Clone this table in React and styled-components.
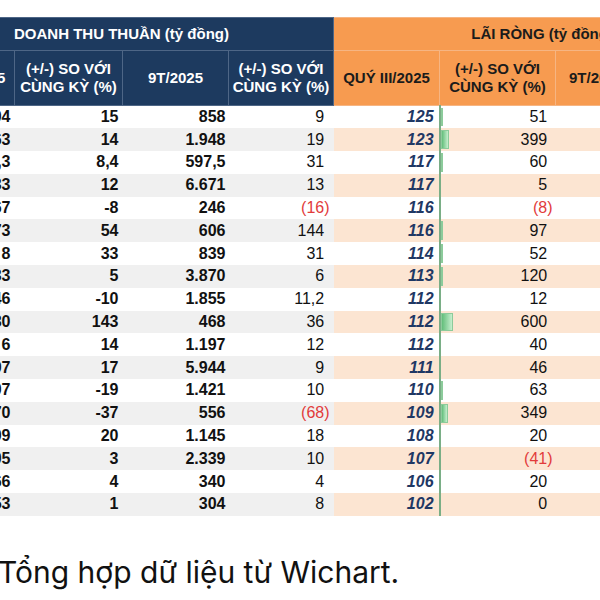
import React from "react";
import styled, { createGlobalStyle } from "styled-components";

const NAVY = "#1d3a5f";
const ORANGE = "#f79b50";

const rows = [
  ["04", "15", "858", 9, "125", 51],
  ["63", "14", "1.948", 19, "123", 399],
  [",3", "8,4", "597,5", 31, "117", 60],
  ["33", "12", "6.671", 13, "117", 5],
  ["67", "-8", "246", -16, "116", -8],
  ["73", "54", "606", 144, "116", 97],
  ["8", "33", "839", 31, "114", 52],
  ["33", "5", "3.870", 6, "113", 120],
  ["46", "-10", "1.855", "11,2", "112", 12],
  ["80", "143", "468", 36, "112", 600],
  ["6", "14", "1.197", 12, "112", 40],
  ["97", "17", "5.944", 9, "111", 46],
  ["07", "-19", "1.421", 10, "110", 63],
  ["70", "-37", "556", -68, "109", 349],
  ["09", "20", "1.145", 18, "108", 20],
  ["05", "3", "2.339", 10, "107", -41],
  ["66", "4", "340", 4, "106", 20],
  ["53", "1", "304", 8, "102", 0],
];

const widths = [105, 108, 106, 105, 106, 116, 82, 113];

const subHeads = [
  "QUÝ III/2025",
  "(+/-) SO VỚI CÙNG KỲ (%)",
  "9T/2025",
  "(+/-) SO VỚI CÙNG KỲ (%)",
  "QUÝ III/2025",
  "(+/-) SO VỚI CÙNG KỲ (%)",
  "9T/2025",
  "(+/-) SO VỚI CÙNG KỲ (%)",
];

const GlobalStyle = createGlobalStyle`
  body {
    margin: 0;
    background: #fff;
    font-family: "Liberation Sans", Arial, sans-serif;
  }
`;

const Page = styled.div`
  width: 600px;
  height: 600px;
  overflow: hidden;
  padding-top: 17px;
  box-sizing: border-box;
`;

const Table = styled.table`
  margin-left: -91px;
  border-collapse: collapse;
  table-layout: fixed;
  width: ${widths.reduce((a, b) => a + b, 0)}px;
`;

const HeadCell = styled.th`
  background: ${(p) => (p.$orange ? ORANGE : NAVY)};
  color: ${(p) => (p.$orange ? "#1b1b1b" : "#fff")};
  border: 1px solid ${(p) => (p.$orange ? "#f6b583" : "#4e6686")};
  font-size: 15px;
  font-weight: 700;
  line-height: 18px;
  text-align: center;
  padding: 0;
  height: ${(p) => (p.$top ? "33px" : "55px")};
  box-sizing: border-box;
  white-space: ${(p) => (p.$top ? "nowrap" : "normal")};
`;

const Row = styled.tr`
  height: 22.8px;
`;

const Cell = styled.td`
  position: relative;
  padding: 0 ${(p) => p.$pad || 4}px 0 0;
  height: 22.8px;
  text-align: right;
  font-size: 16px;
  line-height: 22px;
  white-space: nowrap;
  font-weight: ${(p) => (p.$bold ? 700 : 400)};
  font-style: ${(p) => (p.$italic ? "italic" : "normal")};
  color: ${(p) => (p.$red ? "#e23b3b" : p.$navy ? "#1f3864" : "#111")};
  background: ${(p) =>
    !p.$even ? "#fff" : p.$orange ? "#fce5d2" : "#f0f0f0"};
  border-left: ${(p) => (p.$axis ? "2px solid #7aae86" : "none")};
  box-sizing: border-box;
`;

const Bar = styled.span`
  position: absolute;
  left: 0;
  top: 2px;
  bottom: 2px;
  background: linear-gradient(90deg, #63be7b, #c6efce);
  border: 1px solid #8ccb9b;
  box-sizing: border-box;
`;

const Ghost = styled.span`
  visibility: hidden;
`;

const Caption = styled.p`
  margin: 38px 0 0 -2px;
  font-family: Inter, "Noto Sans", sans-serif;
  font-size: 30px;
  line-height: 36px;
  color: #111;
`;

const Signed = ({ v }) =>
  typeof v === "number" && v < 0 ? (
    <>({Math.abs(v)})</>
  ) : (
    <>
      {v}
      <Ghost>)</Ghost>
    </>
  );

export default function App() {
  return (
    <Page>
      <GlobalStyle />
      <Table>
        <colgroup>
          {widths.map((w, i) => (
            <col key={i} style={{ width: w }} />
          ))}
        </colgroup>
        <thead>
          <tr>
            <HeadCell $top colSpan={4}>
              DOANH THU THUẦN (tỷ đồng)
            </HeadCell>
            <HeadCell $top $orange colSpan={4}>
              LÃI RÒNG (tỷ đồng)
            </HeadCell>
          </tr>
          <tr>
            {subHeads.map((h, i) => (
              <HeadCell key={i} $orange={i >= 4}>
                {h}
              </HeadCell>
            ))}
          </tr>
        </thead>
        <tbody>
          {rows.map((r, i) => {
            const even = i % 2 === 1;
            const barW = Math.max(0, r[5] / 50);
            return (
              <Row key={i}>
                <Cell $even={even} $bold>{r[0]}</Cell>
                <Cell $even={even} $bold>{r[1]}</Cell>
                <Cell $even={even} $bold $pad={3}>{r[2]}</Cell>
                <Cell $even={even} $red={r[3] < 0}>
                  <Signed v={r[3]} />
                </Cell>
                <Cell $even={even} $orange $bold $italic $navy $pad={5}>
                  {r[4]}
                </Cell>
                <Cell $even={even} $orange $axis $red={r[5] < 0} $pad={3}>
                  {barW > 1 && <Bar style={{ width: barW }} />}
                  <Signed v={r[5]} />
                </Cell>
                <Cell $even={even} $orange />
                <Cell $even={even} $orange />
              </Row>
            );
          })}
        </tbody>
      </Table>
      <Caption>Tổng hợp dữ liệu từ Wichart.</Caption>
    </Page>
  );
}
